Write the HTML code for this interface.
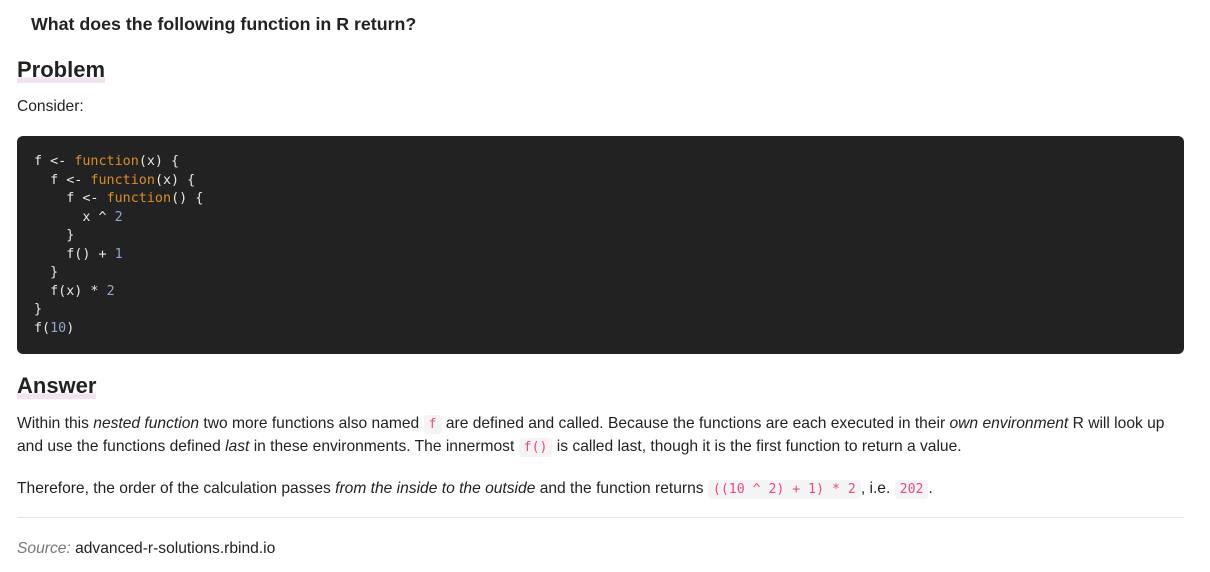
<!DOCTYPE html>
<html><head><meta charset="utf-8"><style>
body{margin:0;background:#fff;font-family:"Liberation Sans",sans-serif;color:#222;width:1210px;height:572px;overflow:hidden;position:relative}
h1{position:absolute;left:31px;top:14px;margin:0;font-size:17.8px;font-weight:bold;color:#222}
h2{position:absolute;left:17px;margin:0;font-size:22px;font-weight:bold;color:#222;background:linear-gradient(transparent 78%,#f1e4f0 78%)}
p{position:absolute;left:17px;margin:0;font-size:15.6px;color:#222;white-space:nowrap;line-height:23px}
.code{position:absolute;left:17px;top:136px;width:1167px;height:218px;background:#222;border-radius:6px}
pre{position:absolute;left:34px;top:153px;margin:0;font-family:"DejaVu Sans Mono","Liberation Mono",monospace;font-size:13.4px;line-height:18.5px;color:#e6e6e6}
.k{color:#d98c2c}.n{color:#8fa5c9}
code{font-family:"DejaVu Sans Mono","Liberation Mono",monospace;font-size:13.2px;color:#e8488b;background:#f4f4f4;padding:2px 5px;border-radius:3px}
hr{position:absolute;left:17px;top:517px;width:1167px;margin:0;border:0;border-top:1px solid #e4e4e4}
</style></head><body>
<h1>What does the following function in R return?</h1>
<h2 style="top:57px">Problem</h2>
<p style="top:95px">Consider:</p>
<div class="code"></div>
<pre>f &lt;- <span class="k">function</span>(x) {
  f &lt;- <span class="k">function</span>(x) {
    f &lt;- <span class="k">function</span>() {
      x ^ <span class="n">2</span>
    }
    f() + <span class="n">1</span>
  }
  f(x) * <span class="n">2</span>
}
f(<span class="n">10</span>)</pre>
<h2 style="top:373px">Answer</h2>
<p style="top:412px">Within this <i>nested function</i> two more functions also named <code>f</code> are defined and called. Because the functions are each executed in their <i>own environment</i> R will look up</p>
<p style="top:435px">and use the functions defined <i>last</i> in these environments. The innermost <code>f()</code> is called last, though it is the first function to return a value.</p>
<p style="top:477px">Therefore, the order of the calculation passes <i>from the inside to the outside</i> and the function returns <code>((10 ^ 2) + 1) * 2</code>, i.e. <code>202</code>.</p>
<hr>
<p style="top:537px"><i style="color:#777">Source:</i> advanced-r-solutions.rbind.io</p>
</body></html>
